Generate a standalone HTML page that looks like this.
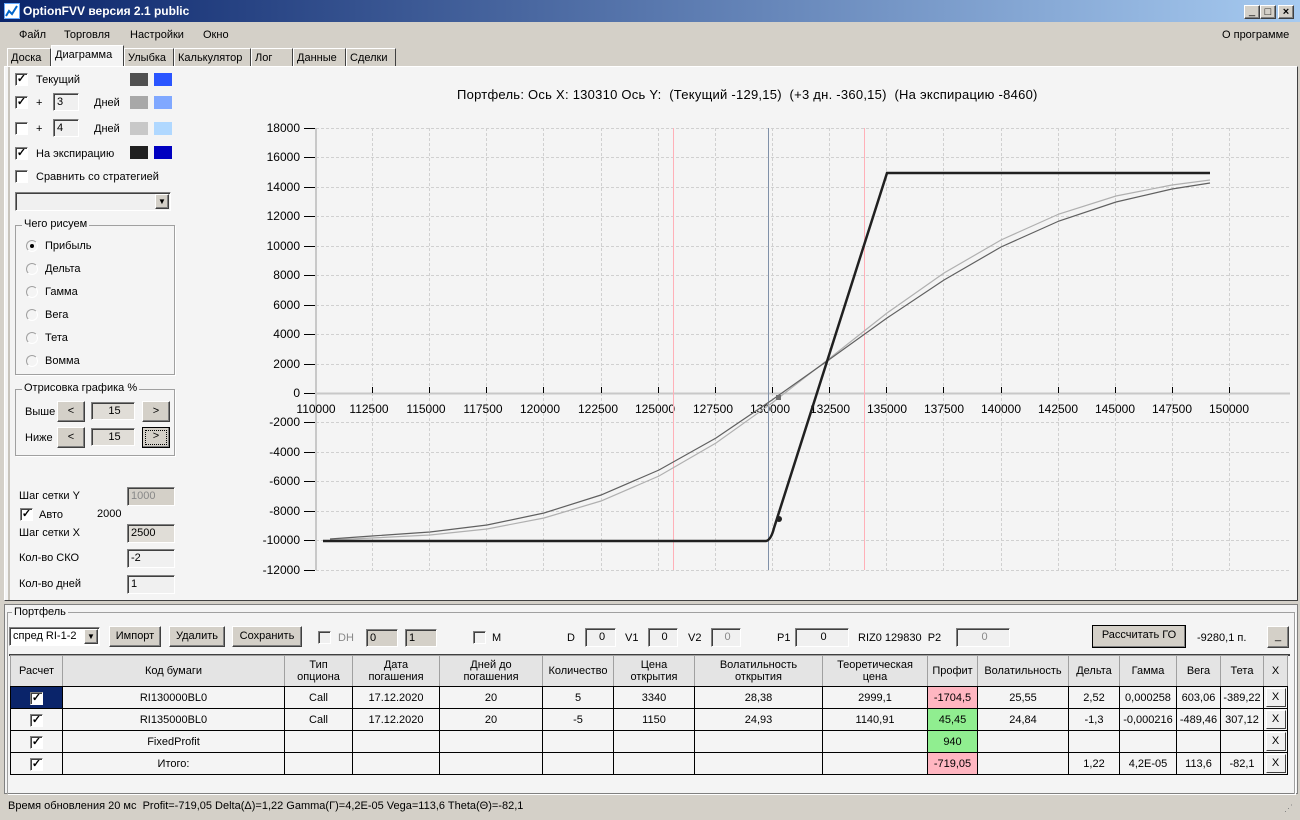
<!DOCTYPE html>
<html><head><meta charset="utf-8"><style>
*{box-sizing:border-box;margin:0;padding:0}
body{width:1300px;height:820px;overflow:hidden;background:#d4d0c8;font-family:"Liberation Sans",sans-serif;font-size:11px;color:#000;position:relative}
.a{position:absolute;white-space:nowrap}
.cb{position:absolute;width:13px;height:13px;border:1px solid #808080;border-right-color:#fff;border-bottom-color:#fff;background:#fff;box-shadow:inset 1px 1px #404040;font-size:11px;line-height:11px;text-align:center;font-weight:bold}
.in{position:absolute;border:1px solid #808080;border-right-color:#fff;border-bottom-color:#fff;background:#f0f0f0;box-shadow:inset 1px 1px #404040;padding-left:3px;font-size:11px;line-height:16px}
.btn{position:absolute;background:#d4d0c8;border:1px solid #fff;border-right-color:#404040;border-bottom-color:#404040;box-shadow:inset -1px -1px #808080;text-align:center;font-size:11px}
.rd{position:absolute;width:12px;height:12px;border-radius:50%;background:#f4f4f4;border:1px solid #a0a0a0;border-right-color:#fff;border-bottom-color:#fff}
.gb{position:absolute;border:1px solid #a0a0a0;box-shadow:1px 1px #fff}
.gbl{position:absolute;background:#f4f4f4;padding:0 2px;top:-8px;left:6px}
.tab{position:absolute;top:48px;height:18px;background:#d4d0c8;border:1px solid #fff;border-right-color:#404040;border-bottom:none;padding:3px 3px 0;font-size:11px}
table{border-collapse:collapse;position:absolute;left:10px;top:655px;font-size:11px}
td{border:1px solid #000;text-align:center;height:22px;background:#f4f4f4;padding:0}
tr.h td{background:#e4e4e4;height:31px;line-height:12px;border-color:#a0a0a0 #a0a0a0 #000 #a0a0a0}
.pk{background:#ffb6c1!important}.gr{background:#90ee90!important}
.x{display:inline-block;width:20px;height:19px;border:1px solid #fff;border-right-color:#404040;border-bottom-color:#404040;background:#f0f0f0;line-height:17px}
</style></head><body>
<!-- title -->
<div class="a" style="left:0;top:0;width:1300px;height:22px;background:linear-gradient(90deg,#0a246a,#a6caf0)"></div>
<div class="a" style="left:4px;top:3px;width:16px;height:16px;background:#fff;border:1px solid #6af"><svg width="14" height="14"><polyline points="1,12 4,7 7,10 12,2" stroke="#06c" fill="none" stroke-width="2"/></svg></div>
<div class="a" style="left:23px;top:4px;color:#fff;font-weight:bold;font-size:12px">OptionFVV версия 2.1 public</div>
<div class="btn" style="left:1244px;top:5px;width:16px;height:14px;line-height:10px">_</div>
<div class="btn" style="left:1260px;top:5px;width:16px;height:14px;line-height:12px">□</div>
<div class="btn" style="left:1278px;top:5px;width:16px;height:14px;line-height:12px;font-weight:bold">×</div>
<!-- menu -->
<div class="a" style="left:19px;top:29px">Файл</div>
<div class="a" style="left:64px;top:29px">Торговля</div>
<div class="a" style="left:130px;top:29px">Настройки</div>
<div class="a" style="left:203px;top:29px">Окно</div>
<div class="a" style="left:1222px;top:29px">О программе</div>
<!-- tabs -->
<div class="tab" style="left:7px;width:44px">Доска</div>
<div class="tab" style="left:51px;width:73px;top:45px;height:21px;background:#f4f4f4;z-index:2">Диаграмма</div>
<div class="tab" style="left:124px;width:50px">Улыбка</div>
<div class="tab" style="left:174px;width:77px">Калькулятор</div>
<div class="tab" style="left:251px;width:42px">Лог</div>
<div class="tab" style="left:293px;width:53px">Данные</div>
<div class="tab" style="left:346px;width:50px">Сделки</div>
<!-- main panel -->
<div class="a" style="left:4px;top:66px;width:1294px;height:535px;background:#f4f4f4;border:1px solid #fff;border-right-color:#404040;border-bottom-color:#404040"></div>
<div class="a" style="left:8px;top:67px;width:2px;height:533px;background:#c8c4bc"></div>
<!-- left controls -->
<div class="cb" style="left:15px;top:73px">✓</div><div class="a" style="left:36px;top:74px">Текущий</div>
<div class="a" style="left:130px;top:73px;width:18px;height:13px;background:#505050"></div><div class="a" style="left:154px;top:73px;width:18px;height:13px;background:#2a55ff"></div>
<div class="cb" style="left:15px;top:96px">✓</div><div class="a" style="left:36px;top:97px">+</div>
<div class="in" style="left:53px;top:93px;width:26px;height:18px">3</div><div class="a" style="left:94px;top:97px">Дней</div>
<div class="a" style="left:130px;top:96px;width:18px;height:13px;background:#a8a8a8"></div><div class="a" style="left:154px;top:96px;width:18px;height:13px;background:#80a8ff"></div>
<div class="cb" style="left:15px;top:122px"></div><div class="a" style="left:36px;top:123px">+</div>
<div class="in" style="left:53px;top:119px;width:26px;height:18px">4</div><div class="a" style="left:94px;top:123px">Дней</div>
<div class="a" style="left:130px;top:122px;width:18px;height:13px;background:#c8c8c8"></div><div class="a" style="left:154px;top:122px;width:18px;height:13px;background:#b0d8ff"></div>
<div class="cb" style="left:15px;top:147px">✓</div><div class="a" style="left:36px;top:148px">На экспирацию</div>
<div class="a" style="left:130px;top:146px;width:18px;height:13px;background:#202020"></div><div class="a" style="left:154px;top:146px;width:18px;height:13px;background:#0000c0"></div>
<div class="cb" style="left:15px;top:170px"></div><div class="a" style="left:36px;top:171px">Сравнить со стратегией</div>
<div class="in" style="left:15px;top:192px;width:156px;height:19px"></div>
<div class="btn" style="left:155px;top:194px;width:14px;height:15px;font-size:8px;line-height:13px">▼</div>
<div class="gb" style="left:15px;top:225px;width:160px;height:150px"><div class="gbl">Чего рисуем</div></div>
<div class="rd" style="left:26px;top:240px"><div style="width:4px;height:4px;background:#000;border-radius:50%;margin:3px"></div></div><div class="a" style="left:45px;top:240px">Прибыль</div>
<div class="rd" style="left:26px;top:263px"></div><div class="a" style="left:45px;top:263px">Дельта</div>
<div class="rd" style="left:26px;top:286px"></div><div class="a" style="left:45px;top:286px">Гамма</div>
<div class="rd" style="left:26px;top:309px"></div><div class="a" style="left:45px;top:309px">Вега</div>
<div class="rd" style="left:26px;top:332px"></div><div class="a" style="left:45px;top:332px">Тета</div>
<div class="rd" style="left:26px;top:355px"></div><div class="a" style="left:45px;top:355px">Вомма</div>
<div class="gb" style="left:15px;top:389px;width:160px;height:67px"><div class="gbl">Отрисовка графика %</div></div>
<div class="a" style="left:25px;top:406px">Выше</div>
<div class="btn" style="left:57px;top:401px;width:28px;height:21px;line-height:19px">&lt;</div>
<div class="in" style="left:91px;top:402px;width:44px;height:18px;background:#e0ddd7;text-align:center">15</div>
<div class="btn" style="left:142px;top:401px;width:28px;height:21px;line-height:19px">&gt;</div>
<div class="a" style="left:25px;top:432px">Ниже</div>
<div class="btn" style="left:57px;top:427px;width:28px;height:21px;line-height:19px">&lt;</div>
<div class="in" style="left:91px;top:428px;width:44px;height:18px;background:#e0ddd7;text-align:center">15</div>
<div class="btn" style="left:142px;top:427px;width:28px;height:21px;line-height:17px;border:1px solid #000;outline:1px dotted #000;outline-offset:-4px">&gt;</div>
<div class="a" style="left:19px;top:490px">Шаг сетки Y</div>
<div class="in" style="left:127px;top:487px;width:48px;height:19px;background:#d4d0c8;color:#888">1000</div>
<div class="cb" style="left:20px;top:508px">✓</div><div class="a" style="left:39px;top:509px">Авто</div><div class="a" style="left:97px;top:508px">2000</div>
<div class="a" style="left:19px;top:527px">Шаг сетки X</div>
<div class="in" style="left:127px;top:524px;width:48px;height:19px;background:#e0ddd7">2500</div>
<div class="a" style="left:19px;top:552px">Кол-во СКО</div>
<div class="in" style="left:127px;top:549px;width:48px;height:19px">-2</div>
<div class="a" style="left:19px;top:578px">Кол-во дней</div>
<div class="in" style="left:127px;top:575px;width:48px;height:19px">1</div>
<!-- chart -->
<div class="a" style="left:457px;top:87px;font-size:13px;letter-spacing:0.25px">Портфель: Ось X: 130310 Ось Y:&nbsp; (Текущий -129,15)&nbsp; (+3 дн. -360,15)&nbsp; (На экспирацию -8460)</div>
<svg class="a" style="left:0;top:0" width="1300" height="600" font-family="Liberation Sans" font-size="12">
<g stroke="#d0d0d0" stroke-dasharray="3,2" stroke-width="1">
<path d="M372.5 128V570M429.5 128V570M486.5 128V570M543.5 128V570M601.5 128V570M658.5 128V570M715.5 128V570M772.5 128V570M829.5 128V570M886.5 128V570M943.5 128V570M1001.5 128V570M1058.5 128V570M1115.5 128V570M1172.5 128V570M1229.5 128V570"/>
<path d="M316 128.5H1290M316 157.5H1290M316 187.5H1290M316 216.5H1290M316 246.5H1290M316 275.5H1290M316 305.5H1290M316 334.5H1290M316 364.5H1290M316 422.5H1290M316 452.5H1290M316 481.5H1290M316 511.5H1290M316 540.5H1290M316 570.5H1290"/>
</g>
<path d="M316 393.5H1290" stroke="#c8c8c8" stroke-width="2"/>
<path d="M316 128V570" stroke="#c8c8c8" stroke-width="2"/>
<g stroke="#000"><path d="M304 128.5h11M304 157.5h11M304 187.5h11M304 216.5h11M304 246.5h11M304 275.5h11M304 305.5h11M304 334.5h11M304 364.5h11M304 393.5h11M304 422.5h11M304 452.5h11M304 481.5h11M304 511.5h11M304 540.5h11M304 570.5h11"/>
<path d="M372.5 393v-6M429.5 393v-6M486.5 393v-6M543.5 393v-6M601.5 393v-6M658.5 393v-6M715.5 393v-6M772.5 393v-6M829.5 393v-6M886.5 393v-6M943.5 393v-6M1001.5 393v-6M1058.5 393v-6M1115.5 393v-6M1172.5 393v-6M1229.5 393v-6"/></g>
<g text-anchor="end">
<text x="300" y="132">18000</text><text x="300" y="161">16000</text><text x="300" y="191">14000</text><text x="300" y="220">12000</text><text x="300" y="250">10000</text><text x="300" y="279">8000</text><text x="300" y="309">6000</text><text x="300" y="338">4000</text><text x="300" y="368">2000</text><text x="300" y="397">0</text><text x="300" y="426">-2000</text><text x="300" y="456">-4000</text><text x="300" y="485">-6000</text><text x="300" y="515">-8000</text><text x="300" y="544">-10000</text><text x="300" y="574">-12000</text>
</g>
<g text-anchor="middle">
<text x="316" y="413">110000</text><text x="369" y="413">112500</text><text x="426" y="413">115000</text><text x="483" y="413">117500</text><text x="540" y="413">120000</text><text x="598" y="413">122500</text><text x="655" y="413">125000</text><text x="713" y="413">127500</text><text x="770" y="413">130000</text><text x="830" y="413">132500</text><text x="887" y="413">135000</text><text x="944" y="413">137500</text><text x="1001" y="413">140000</text><text x="1058" y="413">142500</text><text x="1115" y="413">145000</text><text x="1172" y="413">147500</text><text x="1229" y="413">150000</text>
</g>
<path d="M673.5 128V570M864.5 128V570" stroke="#ffb0b8"/>
<path d="M768.5 128V570" stroke="#8090a8"/>
<polyline fill="none" stroke="#b0b0b0" stroke-width="1.2" points="330,540 372,538 430,535 487,529 544,518 601,501 659,476 716,443 772,403 830,358 887,313 944,273 1001,240 1059,214 1116,196 1172,185 1210,180"/>
<polyline fill="none" stroke="#606060" stroke-width="1.2" points="330,539 372,536 430,532 487,525 544,513 601,495 659,470 716,438 772,400 830,359 887,318 944,280 1001,247 1059,221 1116,202 1172,189 1210,183"/>
<path d="M323 541H766Q771 540 774 528L887 173H1210" fill="none" stroke="#202020" stroke-width="2.5"/>
<circle cx="779" cy="519" r="3" fill="#202020"/>
<rect x="776" y="395" width="5" height="5" fill="#707070"/>
</svg>
<!-- portfolio -->
<div class="a" style="left:4px;top:604px;width:1294px;height:190px;background:#f4f4f4;border:1px solid #808080"></div>
<div class="gb" style="left:7px;top:612px;width:1288px;height:182px;border-bottom:none"></div>
<div class="a" style="left:12px;top:606px;background:#f4f4f4;padding:0 2px">Портфель</div>
<div class="in" style="left:9px;top:627px;width:91px;height:19px;background:#fff">спред RI-1-2</div>
<div class="btn" style="left:84px;top:629px;width:14px;height:15px;font-size:8px;line-height:13px">▼</div>
<div class="btn" style="left:109px;top:626px;width:52px;height:21px;line-height:19px">Импорт</div>
<div class="btn" style="left:169px;top:626px;width:56px;height:21px;line-height:19px">Удалить</div>
<div class="btn" style="left:232px;top:626px;width:70px;height:21px;line-height:19px">Сохранить</div>
<div class="cb" style="left:318px;top:631px;background:#f0f0f0"></div><div class="a" style="left:338px;top:632px;color:#888">DH</div>
<div class="in" style="left:366px;top:629px;width:32px;height:18px;background:#d4d0c8">0</div>
<div class="in" style="left:405px;top:629px;width:32px;height:18px;background:#d4d0c8">1</div>
<div class="cb" style="left:473px;top:631px;background:#f0f0f0"></div><div class="a" style="left:492px;top:632px">M</div>
<div class="a" style="left:567px;top:632px">D</div><div class="in" style="left:585px;top:628px;width:31px;height:19px;text-align:center">0</div>
<div class="a" style="left:625px;top:632px">V1</div><div class="in" style="left:648px;top:628px;width:30px;height:19px;text-align:center">0</div>
<div class="a" style="left:688px;top:632px">V2</div><div class="in" style="left:711px;top:628px;width:30px;height:19px;text-align:center;color:#888">0</div>
<div class="a" style="left:777px;top:632px">P1</div><div class="in" style="left:795px;top:628px;width:54px;height:19px;text-align:center">0</div>
<div class="a" style="left:858px;top:632px">RIZ0 129830&nbsp; P2</div><div class="in" style="left:956px;top:628px;width:54px;height:19px;text-align:center;color:#888">0</div>
<div class="btn" style="left:1092px;top:625px;width:94px;height:23px;line-height:19px;border:1px solid #000">Рассчитать ГО</div>
<div class="a" style="left:1197px;top:632px">-9280,1 п.</div>
<div class="btn" style="left:1267px;top:626px;width:22px;height:22px;line-height:18px">_</div>
<div class="a" style="left:9px;top:654px;width:1281px;height:2px;background:#404040"></div>
<table>
<colgroup><col style="width:52px"><col style="width:222px"><col style="width:68px"><col style="width:87px"><col style="width:103px"><col style="width:71px"><col style="width:81px"><col style="width:128px"><col style="width:105px"><col style="width:50px"><col style="width:91px"><col style="width:51px"><col style="width:57px"><col style="width:44px"><col style="width:43px"><col style="width:24px"></colgroup>
<tr class="h"><td>Расчет</td><td>Код бумаги</td><td>Тип<br>опциона</td><td>Дата<br>погашения</td><td>Дней до<br>погашения</td><td>Количество</td><td>Цена<br>открытия</td><td>Волатильность<br>открытия</td><td>Теоретическая<br>цена</td><td>Профит</td><td>Волатильность</td><td>Дельта</td><td>Гамма</td><td>Вега</td><td>Тета</td><td>X</td></tr>
<tr><td style="background:#0a246a"><span class="cb" style="position:relative;display:inline-block;top:1px">✓</span></td><td>RI130000BL0</td><td>Call</td><td>17.12.2020</td><td>20</td><td>5</td><td>3340</td><td>28,38</td><td>2999,1</td><td class="pk">-1704,5</td><td>25,55</td><td>2,52</td><td>0,000258</td><td>603,06</td><td>-389,22</td><td><span class="x">X</span></td></tr>
<tr><td><span class="cb" style="position:relative;display:inline-block;top:1px">✓</span></td><td>RI135000BL0</td><td>Call</td><td>17.12.2020</td><td>20</td><td>-5</td><td>1150</td><td>24,93</td><td>1140,91</td><td class="gr">45,45</td><td>24,84</td><td>-1,3</td><td>-0,000216</td><td>-489,46</td><td>307,12</td><td><span class="x">X</span></td></tr>
<tr><td><span class="cb" style="position:relative;display:inline-block;top:1px">✓</span></td><td>FixedProfit</td><td></td><td></td><td></td><td></td><td></td><td></td><td></td><td class="gr">940</td><td></td><td></td><td></td><td></td><td></td><td><span class="x">X</span></td></tr>
<tr><td><span class="cb" style="position:relative;display:inline-block;top:1px">✓</span></td><td>Итого:</td><td></td><td></td><td></td><td></td><td></td><td></td><td></td><td class="pk">-719,05</td><td></td><td>1,22</td><td>4,2E-05</td><td>113,6</td><td>-82,1</td><td><span class="x">X</span></td></tr>
</table>
<div class="a" style="left:8px;top:800px">Время обновления 20 мс&nbsp; Profit=-719,05 Delta(Δ)=1,22 Gamma(Γ)=4,2E-05 Vega=113,6 Theta(Θ)=-82,1</div>
<div class="a" style="left:1284px;top:803px;color:#808080;font-size:9px">⋰</div>
</body></html>
